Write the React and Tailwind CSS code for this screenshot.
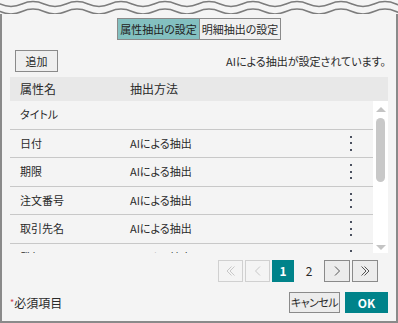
import React from 'react';

const wavePath = (cy, amp) => {
  let d = `M -22 ${cy} Q -11 ${cy - amp * 2} 0 ${cy}`;
  for (let x = 22; x <= 440; x += 22) d += ` T ${x} ${cy}`;
  return d;
};

const rows = [
  { name: 'タイトル', method: '' },
  { name: '日付', method: 'AIによる抽出' },
  { name: '期限', method: 'AIによる抽出' },
  { name: '注文番号', method: 'AIによる抽出' },
  { name: '取引先名', method: 'AIによる抽出' },
  { name: '発行元', method: 'AIによる抽出' },
];

const Kebab = () => (
  <div className="ml-auto mr-[21px] flex flex-col gap-[4.5px]">
    <span className="block w-[2px] h-[2px] bg-[#4b5160]" />
    <span className="block w-[2px] h-[2px] bg-[#4b5160]" />
    <span className="block w-[2px] h-[2px] bg-[#4b5160]" />
  </div>
);

const Chevron = ({ dir = 'right', double = false, color }) => (
  <svg width="12" height="12" viewBox="0 0 12 12" fill="none" stroke={color} strokeWidth="1">
    {dir === 'right' ? (
      double ? (
        <>
          <path d="M2.5 1.5 L7 6 L2.5 10.5" />
          <path d="M5.5 1.5 L10 6 L5.5 10.5" />
        </>
      ) : (
        <path d="M4 1.5 L8.5 6 L4 10.5" />
      )
    ) : double ? (
      <>
        <path d="M9.5 1.5 L5 6 L9.5 10.5" />
        <path d="M6.5 1.5 L2 6 L6.5 10.5" />
      </>
    ) : (
      <path d="M8 1.5 L3.5 6 L8 10.5" />
    )}
  </svg>
);

export default function App() {
  return (
    <div className="w-[398px] h-[323px] bg-[#f4f4f4] flex flex-col text-[#2a2a2a] font-['Noto_Sans_CJK_JP','Noto_Sans',sans-serif] [font-feature-settings:'palt'] overflow-hidden">
      {/* torn top edge */}
      <svg width="398" height="14" className="block shrink-0">
        <path d={wavePath(4, 2.4)} fill="none" stroke="#7c7c7c" strokeWidth="1.5" />
        <path d={wavePath(11.5, 2.4)} fill="none" stroke="#7c7c7c" strokeWidth="1.5" />
      </svg>

      <div className="flex-1 flex flex-col border-x-2 border-b-2 border-[#8a8a8a]">
        {/* tabs */}
        <div className="mt-[4px] flex justify-center">
          <div className="flex border border-[#8a8a8a] text-[11px] leading-none">
            <div className="w-[81px] h-[20px] flex items-center justify-center bg-[#83c0c0] text-[#222]">属性抽出の設定</div>
            <div className="w-[81px] h-[20px] flex items-center justify-center bg-[#f0f0f0] border-l border-[#8a8a8a]">明細抽出の設定</div>
          </div>
        </div>

        {/* toolbar */}
        <div className="mt-[10px] ml-[13px] mr-[10px] flex items-center justify-between">
          <button className="w-[43px] h-[22px] border border-[#8a8a8a] bg-[#efefef] text-[11px] leading-none">追加</button>
          <span className="text-[11px] leading-none">AIによる抽出が設定されています。</span>
        </div>

        {/* table */}
        <div className="mt-[5px] mx-[8px]">
          <div className="h-[24px] bg-[#e8e8e8] flex items-center text-[12px] leading-none">
            <span className="w-[120px] pl-[10px]">属性名</span>
            <span>抽出方法</span>
          </div>
          <div className="h-[152px] flex overflow-hidden">
            <div className="flex-1">
              {rows.map((r, i) => (
                <div key={i} className="h-[28.5px] flex items-center border-b border-[#c8c8c8] text-[11px] leading-none">
                  <span className="w-[120px] pl-[10px]">{r.name}</span>
                  <span>{r.method}</span>
                  {i > 0 && <Kebab />}
                </div>
              ))}
            </div>
            <div className="w-[15px] bg-white flex flex-col items-center pt-[6px] pb-[3px]">
              <div className="w-0 h-0 border-x-[5px] border-x-transparent border-b-[5px] border-b-[#c4c4c4]" />
              <div className="mt-[6px] w-[9px] h-[64px] rounded-full bg-[#c8c8c8]" />
              <div className="mt-auto w-0 h-0 border-x-[5px] border-x-transparent border-t-[5px] border-t-[#c4c4c4]" />
            </div>
          </div>
        </div>

        {/* pagination */}
        <div className="mt-[7px] mr-[18px] flex justify-end items-center gap-[2px]">
          <button className="w-[25px] h-[22px] border border-[#d0d0d0] flex items-center justify-center">
            <Chevron dir="left" double color="#c8c8c8" />
          </button>
          <button className="w-[25px] h-[22px] border border-[#d0d0d0] flex items-center justify-center">
            <Chevron dir="left" color="#c8c8c8" />
          </button>
          <div className="w-[22px] h-[22px] bg-[#00838a] text-white font-bold text-[12px] flex items-center justify-center">1</div>
          <div className="w-[26px] h-[22px] text-[12px] flex items-center justify-center">2</div>
          <button className="w-[26px] h-[22px] border border-[#8a8a8a] bg-[#ececec] flex items-center justify-center">
            <Chevron color="#555" />
          </button>
          <button className="w-[26px] h-[22px] border border-[#8a8a8a] bg-[#ececec] flex items-center justify-center">
            <Chevron double color="#555" />
          </button>
        </div>

        {/* footer */}
        <div className="mt-[10px] ml-[8px] mr-[8px] flex items-center">
          <span className="text-[12px] leading-none">
            <span className="text-[#d0404f] text-[9px] align-[2px]">*</span>必須項目
          </span>
          <button className="ml-auto w-[51px] h-[21px] px-0 border border-[#8a8a8a] bg-[#ececec] text-[11px] leading-none whitespace-nowrap tracking-[-0.5px]">キャンセル</button>
          <button className="ml-[5px] w-[43px] h-[21px] bg-[#00838a] text-white font-bold text-[12px] leading-none">OK</button>
        </div>
      </div>
    </div>
  );
}
